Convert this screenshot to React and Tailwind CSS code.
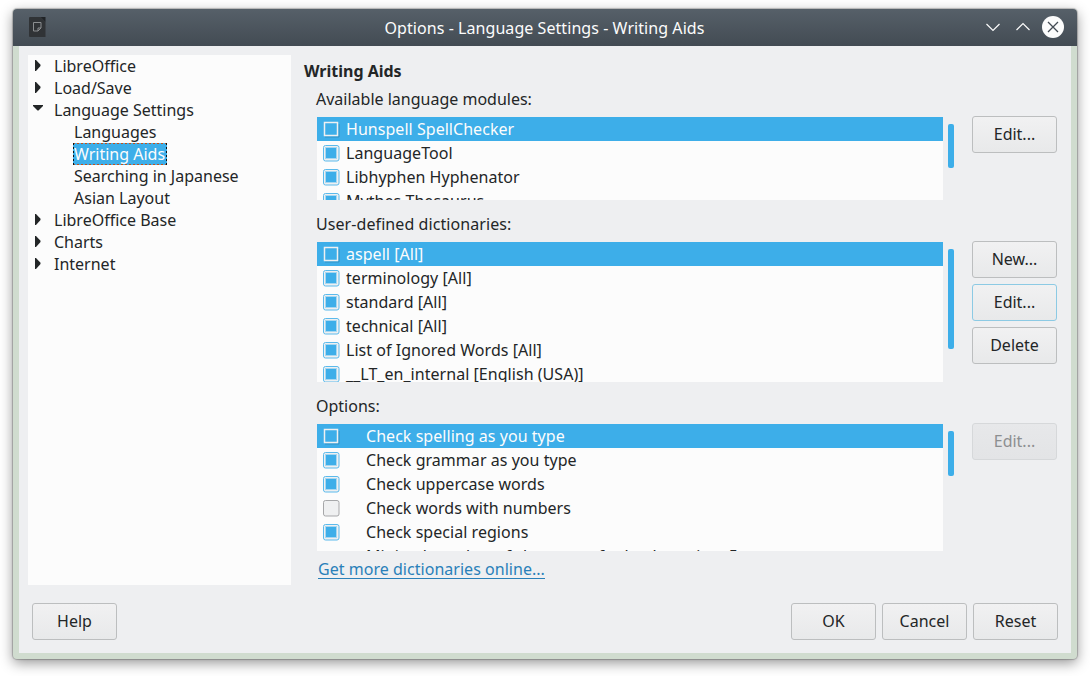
const tree = [
  { label: 'LibreOffice', kind: 'closed' },
  { label: 'Load/Save', kind: 'closed' },
  { label: 'Language Settings', kind: 'open' },
  { label: 'Languages', kind: 'child' },
  { label: 'Writing Aids', kind: 'child', selected: true },
  { label: 'Searching in Japanese', kind: 'child' },
  { label: 'Asian Layout', kind: 'child' },
  { label: 'LibreOffice Base', kind: 'closed' },
  { label: 'Charts', kind: 'closed' },
  { label: 'Internet', kind: 'closed' },
];

const modules = [
  { label: 'Hunspell SpellChecker', state: 'selected' },
  { label: 'LanguageTool', state: 'on' },
  { label: 'Libhyphen Hyphenator', state: 'on' },
  { label: 'Mythes Thesaurus', state: 'on' },
];

const dictionaries = [
  { label: 'aspell [All]', state: 'selected' },
  { label: 'terminology [All]', state: 'on' },
  { label: 'standard [All]', state: 'on' },
  { label: 'technical [All]', state: 'on' },
  { label: 'List of Ignored Words [All]', state: 'on' },
  { label: '__LT_en_internal [English (USA)]', state: 'on' },
];

const options = [
  { label: 'Check spelling as you type', state: 'selected' },
  { label: 'Check grammar as you type', state: 'on' },
  { label: 'Check uppercase words', state: 'on' },
  { label: 'Check words with numbers', state: 'off' },
  { label: 'Check special regions', state: 'on' },
  { label: 'Minimal number of characters for hyphenation: 5', state: 'none' },
];

function Arrow({ kind }) {
  if (kind === 'open') {
    return (
      <svg className="mt-[6px] ml-[5px] h-[6px] w-[10px]" viewBox="0 0 10 6">
        <path d="M0 0h10v1L5.500 5.500h-1L0 1z" fill="#232627" />
      </svg>
    );
  }
  return (
    <svg className="mt-[5px] ml-[7px] h-[11px] w-[6px]" viewBox="0 0 6 11">
      <path d="M0 0h1L5.500 4.800v1.200L1 11H0z" fill="#232627" />
    </svg>
  );
}

function TreeRow({ label, kind, selected }) {
  return (
    <li className="flex h-[22px] items-start leading-[22px]">
      {kind === 'child' ? (
        <span className="w-[45px] shrink-0" />
      ) : (
        <span className="w-[26px] shrink-0">
          <Arrow kind={kind} />
        </span>
      )}
      {selected ? (
        <span className="relative h-[22px] w-[94px] bg-[#3daee9] pl-px text-[#fcfcfc]">
          {label}
          <svg className="absolute inset-0 h-[22px] w-[94px]" viewBox="0 0 94 22" fill="none">
            <path d="M0 .5h94M0 21.500h94" stroke="#c2511a" strokeDasharray="2 2" />
            <path d="M.5 0v22M93.500 0v22" stroke="#0b1418" strokeDasharray="2 2" />
          </svg>
        </span>
      ) : (
        <span className={kind === 'child' ? 'pl-px' : ''}>{label}</span>
      )}
    </li>
  );
}

function Check({ state }) {
  if (state === 'none') return <span className="w-[17px] shrink-0" />;
  if (state === 'selected') {
    return (
      <svg className="mt-1 h-[17px] w-[17px] shrink-0" viewBox="0 0 17 17" fill="none">
        <path d="M2 16h14V3" stroke="#2b7ba6" strokeOpacity=".55" />
        <rect x="1.500" y="1.500" width="13" height="13" stroke="#eff0f1" strokeWidth="1.500" />
      </svg>
    );
  }
  if (state === 'off') {
    return (
      <svg className="mt-1 h-[17px] w-[17px] shrink-0" viewBox="0 0 17 17">
        <rect x=".5" y=".5" width="15.500" height="15.500" rx="2" fill="#eff0f1" stroke="#a6a7a9" />
      </svg>
    );
  }
  return (
    <svg className="mt-1 h-[17px] w-[17px] shrink-0" viewBox="0 0 17 17">
      <rect x=".5" y=".5" width="15.500" height="15.500" rx="2" fill="#eff0f1" stroke="#5bbaec" />
      <rect x="2.500" y="2.500" width="11" height="11" fill="#3daee9" stroke="#a8d7f0" />
    </svg>
  );
}

function List({ items, height, thumb, wide }) {
  return (
    <div className="flex">
      <ul className={'w-[626px] overflow-hidden bg-[#fcfcfc] ' + height}>
        {items.map((item) => (
          <li
            key={item.label}
            className={
              'flex h-6 items-start pl-[6px] leading-6 tracking-[0.04px] whitespace-nowrap ' +
              (wide ? 'gap-[26px] ' : 'gap-[6px] ') +
              (item.state === 'selected' ? 'bg-[#3daee9] text-[#fcfcfc]' : '')
            }
          >
            <Check state={item.state} />
            <span>{item.label}</span>
          </li>
        ))}
      </ul>
      <div className={'mt-[7px] ml-[5px] w-[6px] rounded-[2px] bg-[#3daee9] ' + thumb} />
    </div>
  );
}

function Button({ children, tone = 'normal' }) {
  const tones = {
    normal: 'border-[#bcbebf] from-[#f1f1f2] to-[#e8e9ea]',
    focus: 'border-[#8ccae4] from-[#f1f1f2] to-[#e8e9ea]',
    disabled: 'border-[#d6d8da] from-[#e7e8ea] to-[#e3e4e6] text-[#8d8f91]',
  };
  return (
    <button
      className={
        'flex h-[37px] w-[85px] items-start justify-center rounded-[3px] border bg-linear-to-b leading-[34px] ' +
        tones[tone]
      }
    >
      {children}
    </button>
  );
}

function TitleBar() {
  return (
    <header className="flex h-[37px] items-center rounded-t-[4px] bg-linear-to-b from-[#566069] to-[#434b53] pr-[13px] pl-4 text-[#fcfcfc]">
      <svg className="-mt-[2px] h-5 w-[17px]" viewBox="0 0 17 20" fill="none">
        <path d="M0 1a1 1 0 0 1 1-1h10.500L16.500 5v15H1a1 1 0 0 1-1-1z" fill="#303336" />
        <path d="M11.500 0h5v5z" fill="#202326" />
        <path d="M4.500 5.500h7.500v5.500L9 14H4.500zM12 11H9v3" stroke="#8b8e90" />
      </svg>
      <h1 className="ml-[59px] flex-1 text-center tracking-[0.06px]">Options - Language Settings - Writing Aids</h1>
      <svg className="-mt-px h-[22px] w-[80px]" viewBox="0 0 80 22" fill="none">
        <path d="M2.500 8l6.500 6.500L15.500 8M32.500 14L39 7.500l6.500 6.500" stroke="#fcfcfc" strokeWidth="1.200" />
        <circle cx="69" cy="11" r="11" fill="#fcfcfc" />
        <path d="M64 6l10 10M74 6L64 16" stroke="#434b53" strokeWidth="1.300" />
      </svg>
    </header>
  );
}

export default function App() {
  return (
    <div className="h-[676px] w-[1090px] overflow-hidden bg-white pt-[9px] pl-[13px] font-['Noto_Sans',sans-serif] text-[16px] text-[#232627]">
      <div className="h-[650px] w-[1064px] rounded-[4px] bg-[#d0dccf] shadow-[0_0_1px_1px_rgba(0,0,0,0.22),0_4px_13px_0px_rgba(0,0,0,0.42)]">
        <TitleBar />
        <div className="mx-[6px] h-[607px] bg-[#eeeff1] pt-[9px]">
          <div className="flex h-[530px]">
            <ul className="ml-[9px] w-[263px] bg-[#fcfcfc]">
              {tree.map((row) => (
                <TreeRow key={row.label} {...row} />
              ))}
            </ul>
            <main className="ml-[13px] flex-1">
              <h2 className="h-[33px] leading-[33px] font-bold">Writing Aids</h2>
              <section className="ml-3">
                <h3 className="h-[29px] leading-[23px]">Available language modules:</h3>
                <div className="flex h-[83px] pl-px">
                  <div className="w-[655px]">
                    <List items={modules} height="h-[83px]" thumb="h-[44px]" />
                  </div>
                  <div className="-mt-px">
                    <Button>Edit...</Button>
                  </div>
                </div>
              </section>
              <section className="ml-3">
                <h3 className="h-[42px] leading-[48px] tracking-[0.08px]">User-defined dictionaries:</h3>
                <div className="flex h-[140px] pl-px">
                  <div className="w-[655px]">
                    <List items={dictionaries} height="h-[140px]" thumb="h-[100px]" />
                  </div>
                  <div className="-mt-px flex flex-col gap-[6px]">
                    <Button>New...</Button>
                    <Button tone="focus">Edit...</Button>
                    <Button>Delete</Button>
                  </div>
                </div>
              </section>
              <section className="ml-3">
                <h3 className="h-[42px] leading-[48px]">Options:</h3>
                <div className="flex h-[127px] pl-px">
                  <div className="w-[655px]">
                    <List items={options} height="h-[127px]" thumb="h-[45px]" wide />
                  </div>
                  <div className="-mt-px">
                    <Button tone="disabled">Edit...</Button>
                  </div>
                </div>
              </section>
              <a className="mt-2 ml-[14px] block h-5 w-fit border-b border-[#2980b9] leading-[20px] tracking-[0.03px] text-[#2980b9]">
                Get more dictionaries online...
              </a>
            </main>
          </div>
          <footer className="mt-[18px] flex gap-[6px] pr-[13px] pl-[13px]">
            <div className="flex-1">
              <Button>Help</Button>
            </div>
            <Button>OK</Button>
            <Button>Cancel</Button>
            <Button>Reset</Button>
          </footer>
        </div>
      </div>
    </div>
  );
}
